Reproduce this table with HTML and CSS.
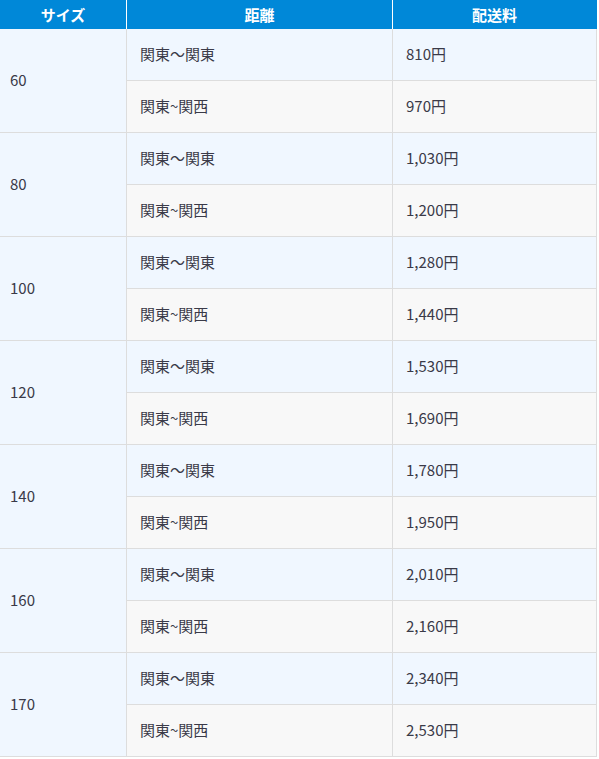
FILE: index.html
```html
<!DOCTYPE html>
<html lang="ja">
<head>
<meta charset="utf-8">
<link rel="stylesheet" href="styles.css">
</head>
<body>
<table class="rates">
  <thead>
    <tr><th class="c-size">サイズ</th><th class="c-dist">距離</th><th class="c-fee">配送料</th></tr>
  </thead>
  <tbody>
    <tr class="a"><td class="size" rowspan="2">60</td><td>関東～関東</td><td>810円</td></tr>
    <tr class="b"><td>関東~関西</td><td>970円</td></tr>
    <tr class="a"><td class="size" rowspan="2">80</td><td>関東～関東</td><td>1,030円</td></tr>
    <tr class="b"><td>関東~関西</td><td>1,200円</td></tr>
    <tr class="a"><td class="size" rowspan="2">100</td><td>関東～関東</td><td>1,280円</td></tr>
    <tr class="b"><td>関東~関西</td><td>1,440円</td></tr>
    <tr class="a"><td class="size" rowspan="2">120</td><td>関東～関東</td><td>1,530円</td></tr>
    <tr class="b"><td>関東~関西</td><td>1,690円</td></tr>
    <tr class="a"><td class="size" rowspan="2">140</td><td>関東～関東</td><td>1,780円</td></tr>
    <tr class="b"><td>関東~関西</td><td>1,950円</td></tr>
    <tr class="a"><td class="size" rowspan="2">160</td><td>関東～関東</td><td>2,010円</td></tr>
    <tr class="b"><td>関東~関西</td><td>2,160円</td></tr>
    <tr class="a"><td class="size" rowspan="2">170</td><td>関東～関東</td><td>2,340円</td></tr>
    <tr class="b"><td>関東~関西</td><td>2,530円</td></tr>
  </tbody>
</table>
</body>
</html>
```
FILE: styles.css
```css
html, body {
  margin: 0;
  padding: 0;
  background: #fff;
}
body {
  font-family: "Noto Sans CJK JP", "Noto Sans", sans-serif;
  color: #3a3a48;
  font-size: 15px;
}
.rates {
  border-collapse: separate;
  border-spacing: 0;
  width: 597px;
  table-layout: fixed;
}
.rates th, .rates td {
  box-sizing: border-box;
}
.c-size { width: 127px; }
.c-dist { width: 266px; }
.c-fee { width: 204px; }
.rates th {
  background: #0088d8;
  color: #fff;
  font-weight: bold;
  font-size: 15px;
  height: 29px;
  padding: 0;
  line-height: 28px;
  border-right: 1px solid #fff;
  text-align: center;
}
.rates th:last-child { border-right-color: #0088d8; }
.rates td {
  height: 52px;
  padding: 0 0 2px 13px;
  border-right: 1px solid #dddddd;
  border-bottom: 1px solid #dddddd;
  line-height: 20px;
  vertical-align: middle;
}
.rates td.size {
  padding-left: 10px;
}
.rates tr.a td { background: #f0f7ff; }
.rates tr.b td { background: #f8f8f8; }
.rates tr.a td.size { background: #f0f7ff; }
```
